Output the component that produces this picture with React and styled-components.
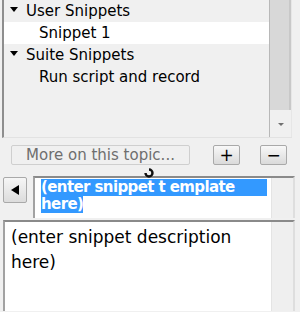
import React from 'react';
import styled, { createGlobalStyle } from 'styled-components';

const GlobalStyle = createGlobalStyle`
  html, body {
    margin: 0;
    padding: 0;
    background: #f0f0f0;
    overflow: hidden;
  }
  body {
    font-family: "DejaVu Sans", Verdana, sans-serif;
  }
`;

const Page = styled.div`
  position: relative;
  width: 300px;
  height: 312px;
  background: #f0f0f0;
  overflow: hidden;
`;

const TreePanel = styled.div`
  display: flex;
  width: 290px;
  height: 138px;
  margin-left: 2px;
  border-left: 2px solid #8e8e8e;
  border-bottom: 1px solid #e2e2e2;
  box-sizing: border-box;
`;

const TreeList = styled.div`
  flex: 1;
  display: flex;
  flex-direction: column;
`;

const TreeRow = styled.div`
  display: flex;
  align-items: center;
  height: 22px;
  padding-left: ${(p) => p.indent}px;
  background: ${(p) => (p.selected ? '#ffffff' : 'transparent')};
  font-size: 15px;
  color: #000;
  white-space: nowrap;
`;

const Caret = styled.span`
  width: 0;
  height: 0;
  border-left: 4px solid transparent;
  border-right: 4px solid transparent;
  border-top: 5px solid #000;
  margin-right: 8px;
  margin-top: -4px;
`;

const VScroll = styled.div`
  width: 21px;
  display: flex;
  flex-direction: column;
  border-left: 1px solid #b8b8b8;
  border-right: 1px solid #e6e6e6;
`;

const Thumb = styled.div`
  height: 110px;
  background: #d8d8d8;
  border-right: 2px solid #c8c8c8;
`;

const Track = styled.div`
  flex: 1;
  display: flex;
  align-items: flex-end;
  justify-content: center;
  padding-bottom: 11px;
  background: #f0f0f0;
`;

const DownArrow = styled.span`
  width: 0;
  height: 0;
  border-left: 3px solid transparent;
  border-right: 3px solid transparent;
  border-top: 3px solid #707070;
`;

const ButtonRow = styled.div`
  display: flex;
  align-items: flex-start;
  height: 38px;
  padding-top: 7px;
  padding-left: 11px;
  box-sizing: border-box;
`;

const Button = styled.div`
  display: flex;
  align-items: center;
  justify-content: center;
  box-sizing: border-box;
  width: ${(p) => p.w}px;
  height: 20px;
  margin-right: ${(p) => p.gap || 0}px;
  border: 1px solid ${(p) => (p.disabled ? '#cfcfcf' : '#a9a9a9')};
  border-radius: 2px;
  background: ${(p) =>
    p.disabled ? '#f0f0f0' : 'linear-gradient(#f8f8f8, #dadada)'};
  color: ${(p) => (p.disabled ? '#6e6e6e' : '#000')};
  font-size: ${(p) => p.size || 15}px;
`;

const Busy = styled.svg`
  position: absolute;
  left: 144px;
  top: 168px;
`;

const TemplateRow = styled.div`
  display: flex;
  align-items: flex-start;
  height: 44px;
  padding-left: 3px;
  box-sizing: border-box;
`;

const ArrowButton = styled.div`
  display: flex;
  align-items: center;
  justify-content: center;
  width: 24px;
  height: 26px;
  margin-top: 1px;
  margin-right: 6px;
  box-sizing: border-box;
  border: 1px solid #a9a9a9;
  border-radius: 2px;
  background: linear-gradient(#f6f6f6, #dcdcdc);
`;

const LeftTri = styled.span`
  width: 0;
  height: 0;
  border-top: 5px solid transparent;
  border-bottom: 5px solid transparent;
  border-right: 8px solid #000;
`;

const Editor = styled.div`
  display: flex;
  width: ${(p) => p.w}px;
  height: ${(p) => p.h}px;
  box-sizing: border-box;
  border-top: 2px solid #8a8a8a;
  border-left: 2px solid #a2a2a2;
  border-right: 2px solid #dedede;
  background: #fff;
`;

const EditorText = styled.div`
  flex: 1;
  padding: ${(p) => p.pad};
  font-size: ${(p) => p.size}px;
  line-height: ${(p) => p.lh}px;
  font-weight: ${(p) => (p.bold ? 700 : 400)};
  letter-spacing: ${(p) => p.ls || 0}px;
  color: #000;
  white-space: nowrap;
`;

const Sel = styled.span`
  display: inline-block;
  background: #3399ff;
  color: #fff;
  padding-right: ${(p) => p.extra || 0}px;
`;

const EditorGutter = styled.div`
  width: 21px;
  background: #efefef;
  border-left: 1px solid #e4e4e4;
`;

const DescWrap = styled.div`
  padding-left: 3px;
`;

export default function App() {
  return (
    <Page>
      <GlobalStyle />
      <TreePanel>
        <TreeList>
          <TreeRow indent={6}>
            <Caret />
            User Snippets
          </TreeRow>
          <TreeRow indent={35} selected>
            Snippet 1
          </TreeRow>
          <TreeRow indent={6}>
            <Caret />
            Suite Snippets
          </TreeRow>
          <TreeRow indent={35}>Run script and record</TreeRow>
        </TreeList>
        <VScroll>
          <Thumb />
          <Track>
            <DownArrow />
          </Track>
        </VScroll>
      </TreePanel>

      <ButtonRow>
        <Button w={179} gap={23} disabled>
          More on this topic...
        </Button>
        <Button w={27} gap={20} size={17}>
          +
        </Button>
        <Button w={27} size={17}>
          −
        </Button>
      </ButtonRow>

      <Busy width="10" height="10" viewBox="0 0 10 10">
        <path
          d="M5 1.5 A3.5 3.5 0 1 1 1.5 5"
          fill="none"
          stroke="#111"
          strokeWidth="2.4"
        />
      </Busy>

      <TemplateRow>
        <ArrowButton>
          <LeftTri />
        </ArrowButton>
        <Editor w={262} h={42}>
          <EditorText size={15} lh={17} ls={-0.6} pad="1px 0 0 6px" bold>
            <Sel extra={32}>(enter snippet t emplate</Sel>
            <br />
            <Sel>here)</Sel>
          </EditorText>
          <EditorGutter />
        </Editor>
      </TemplateRow>

      <DescWrap>
        <Editor w={292} h={91}>
          <EditorText size={17} lh={25} pad="3px 0 0 6px">
            (enter snippet description
            <br />
            here)
          </EditorText>
          <EditorGutter />
        </Editor>
      </DescWrap>
    </Page>
  );
}
